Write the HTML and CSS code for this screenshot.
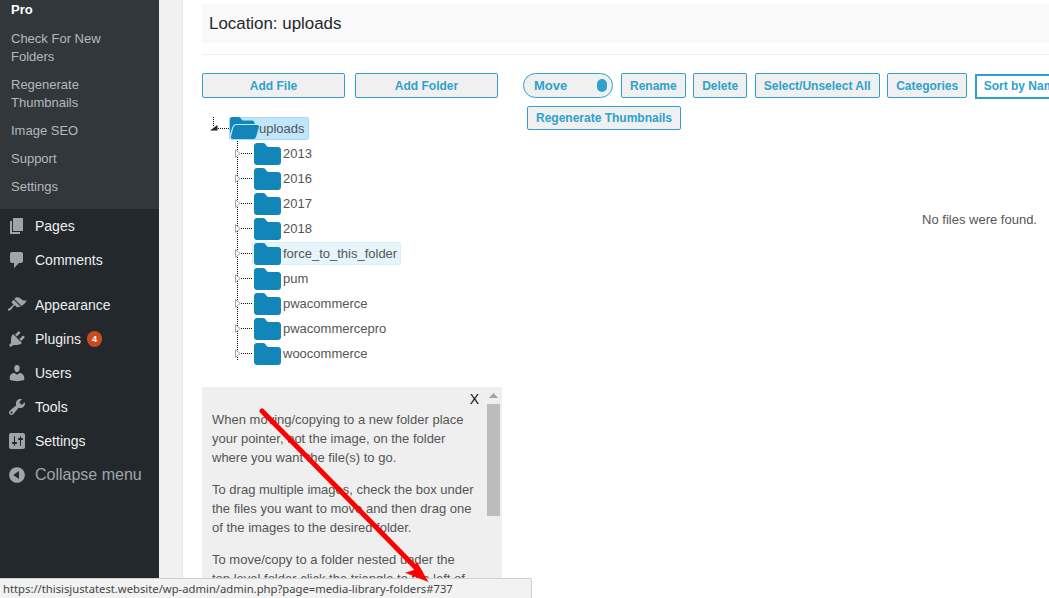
FILE: index.html
```html
<!DOCTYPE html>
<html lang="en">
<head>
<meta charset="utf-8">
<title>Media Library Folders</title>
<link rel="stylesheet" href="styles.css">
</head>
<body>
<div class="app">
  <nav class="sidebar">
    <ul class="submenu">
      <li class="current">Pro</li>
      <li>Check For New Folders</li>
      <li>Regenerate Thumbnails</li>
      <li>Image SEO</li>
      <li>Support</li>
      <li>Settings</li>
    </ul>
    <ul class="menu">
      <li><svg class="ico" viewBox="0 0 20 20"><path d="M6 15V2h10v13H6zm-1 1h8v2H3V5h2v11z"/></svg>Pages</li>
      <li><svg class="ico" viewBox="0 0 20 20"><path d="M5 2h9c1.1 0 2 .9 2 2v7c0 1.1-.9 2-2 2h-2l-5 5v-5H5c-1.1 0-2-.9-2-2V4c0-1.1.9-2 2-2z"/></svg>Comments</li>
      <li class="sep"></li>
      <li><svg class="ico" viewBox="0 0 20 20"><path d="M14.48 11.06L7.41 3.99l1.5-1.5c.5-.56 2.3-.47 3.51.32 1.21.8 1.43 1.28 2.91 2.1 1.3.7 2.8.9 4.3.5-.7 2-2.5 3.5-5.15 5.65zm-.71.71L6.7 4.7 4.93 6.47c-.39.39-.39 1.02 0 1.41l1.06 1.06c.39.39.39 1.03 0 1.42-.6.6-1.43 1.11-2.21 1.69-.35.26-.7.53-1.01.84C1.43 13.23.4 14.67 1.21 15.5s2.1-.24 3.33-1.45c.31-.31.58-.66.84-1.01.58-.78 1.09-1.61 1.69-2.21.39-.39 1.03-.39 1.42 0l1.06 1.06c.39.39 1.02.39 1.41 0z"/></svg>Appearance</li>
      <li><svg class="ico" viewBox="0 0 20 20"><path d="M13.11 4.36L9.87 7.6 8 5.73l3.24-3.24c.35-.34 1.05-.2 1.56.32.52.51.66 1.21.31 1.55zm-8 1.77l.91-1.12 9.01 9.01-1.19.84c-.71.71-2.63 1.16-3.82 1.16H6.14L4.9 17.26c-.59.59-1.54.59-2.12 0-.59-.58-.59-1.53 0-2.12l1.24-1.24v-3.88c0-1.13.4-3.19 1.09-3.89zm7.26 3.97l3.24-3.24c.34-.35 1.04-.21 1.55.31.52.51.66 1.21.31 1.55l-3.24 3.25z"/></svg>Plugins<span class="badge">4</span></li>
      <li><svg class="ico" viewBox="0 0 20 20"><path d="M10 9.25c-2.27 0-2.73-3.44-2.73-3.44C7 4.02 7.82 2 9.97 2c2.16 0 2.98 2.02 2.71 3.81 0 0-.41 3.44-2.68 3.44zm0 2.57L12.72 10c2.39 0 4.52 2.33 4.52 4.53v2.49s-3.65 1.13-7.24 1.13c-3.65 0-7.24-1.13-7.24-1.13v-2.49c0-2.25 1.94-4.48 4.47-4.48z"/></svg>Users</li>
      <li><svg class="ico" viewBox="0 0 20 20"><path d="M16.68 9.77c-1.34 1.34-3.3 1.67-4.95.99l-5.41 6.52c-.99.99-2.59.99-3.58 0s-.99-2.59 0-3.57l6.52-5.42c-.68-1.65-.35-3.61.99-4.95 1.28-1.28 3.12-1.62 4.72-1.06l-2.89 2.89 2.82 2.82 2.86-2.87c.53 1.58.18 3.39-1.08 4.65zM3.81 16.21c.4.39 1.04.39 1.43 0 .4-.4.4-1.04 0-1.43-.39-.4-1.03-.4-1.43 0-.39.39-.39 1.03 0 1.43z"/></svg>Tools</li>
      <li><svg class="ico" viewBox="0 0 20 20"><path d="M18 16V4c0-1.1-.9-2-2-2H4c-1.1 0-2 .9-2 2v12c0 1.1.9 2 2 2h12c1.1 0 2-.9 2-2zM8 11h1c.55 0 1 .45 1 1s-.45 1-1 1H8v1.5c0 .28-.22.5-.5.5s-.5-.22-.5-.5V13H6c-.55 0-1-.45-1-1s.45-1 1-1h1V5.5c0-.28.22-.5.5-.5s.5.22.5.5V11zm5-2h-1c-.55 0-1-.45-1-1s.45-1 1-1h1V5.5c0-.28.22-.5.5-.5s.5.22.5.5V7h1c.55 0 1 .45 1 1s-.45 1-1 1h-1v5.5c0 .28-.22.5-.5.5s-.5-.22-.5-.5V9z"/></svg>Settings</li>
      <li class="collapse"><svg class="ico" viewBox="0 0 20 20"><path d="M10 2.16c4.33 0 7.84 3.51 7.84 7.84s-3.51 7.84-7.84 7.84S2.16 14.33 2.16 10C2.16 5.71 5.71 2.16 10 2.16zm2 11.72V6.12L6.18 9.97z"/></svg>Collapse menu</li>
    </ul>
  </nav>
  <main class="content">
    <div class="location">Location: uploads</div>
    <div class="rule"></div>
    <div class="columns">
      <section class="left">
        <div class="add-row">
          <button class="btn wide">Add File</button>
          <button class="btn wide">Add Folder</button>
        </div>
        <div class="tree">
          <div class="root-row">
            <svg class="root-toggle" viewBox="0 0 8 6"><path d="M7.5 0v5.500H0z" fill="#222"/></svg>
            <span class="root-dots"></span>
            <span class="node selected">
              <svg class="folder-open" viewBox="0 0 29 22"><path d="M0 2.5C0 1 1 0 2.5 0h6c1.5 0 2 1 3 2.5.4.7 1 1 2 1h8.5c1.4 0 2.5 1 2.5 2.5v1H6.5C4 7 3 8.4 2.4 10L0 17z" fill="#1286b9"/><path d="M6.6 8H27c1.5 0 2.2 1 1.8 2.4l-2.6 9.2c-.4 1.4-1.4 2.4-3 2.4H3c-1.600 0-2.400-1-2-2.400L3.400 10.400C3.900 8.900 5 8 6.600 8z" fill="#1286b9"/></svg>
              <span>uploads</span>
            </span>
          </div>
          <ul class="children">
            <li class="row"><svg class="toggle" viewBox="0 0 6 9"><path d="M.5.7v7.6L5.2 4.500z" fill="#fff" stroke="#a5a5a5"/></svg><span class="dots"></span><svg class="folder" viewBox="0 0 27 22"><path d="M0 3C0 1.300 1.300 0 3 0h6c1.500 0 2.300.8 3 2 .6 1.100 1.300 2 3 2h9c1.700 0 3 1.300 3 3v12c0 1.700-1.300 3-3 3H3c-1.700 0-3-1.300-3-3z" fill="#1286b9"/></svg><span class="label">2013</span></li>
            <li class="row"><svg class="toggle" viewBox="0 0 6 9"><path d="M.5.7v7.6L5.2 4.500z" fill="#fff" stroke="#a5a5a5"/></svg><span class="dots"></span><svg class="folder" viewBox="0 0 27 22"><path d="M0 3C0 1.300 1.300 0 3 0h6c1.500 0 2.300.8 3 2 .6 1.100 1.300 2 3 2h9c1.700 0 3 1.300 3 3v12c0 1.700-1.300 3-3 3H3c-1.700 0-3-1.300-3-3z" fill="#1286b9"/></svg><span class="label">2016</span></li>
            <li class="row"><svg class="toggle" viewBox="0 0 6 9"><path d="M.5.7v7.6L5.2 4.500z" fill="#fff" stroke="#a5a5a5"/></svg><span class="dots"></span><svg class="folder" viewBox="0 0 27 22"><path d="M0 3C0 1.300 1.300 0 3 0h6c1.500 0 2.300.8 3 2 .6 1.100 1.300 2 3 2h9c1.700 0 3 1.300 3 3v12c0 1.700-1.300 3-3 3H3c-1.700 0-3-1.300-3-3z" fill="#1286b9"/></svg><span class="label">2017</span></li>
            <li class="row"><svg class="toggle" viewBox="0 0 6 9"><path d="M.5.7v7.6L5.2 4.500z" fill="#fff" stroke="#a5a5a5"/></svg><span class="dots"></span><svg class="folder" viewBox="0 0 27 22"><path d="M0 3C0 1.300 1.300 0 3 0h6c1.500 0 2.300.8 3 2 .6 1.100 1.300 2 3 2h9c1.700 0 3 1.300 3 3v12c0 1.700-1.300 3-3 3H3c-1.700 0-3-1.300-3-3z" fill="#1286b9"/></svg><span class="label">2018</span></li>
            <li class="row hover"><svg class="toggle" viewBox="0 0 6 9"><path d="M.5.7v7.6L5.2 4.500z" fill="#fff" stroke="#a5a5a5"/></svg><span class="dots"></span><span class="hover-node"><svg class="folder" viewBox="0 0 27 22"><path d="M0 3C0 1.300 1.300 0 3 0h6c1.500 0 2.300.8 3 2 .6 1.100 1.300 2 3 2h9c1.700 0 3 1.300 3 3v12c0 1.700-1.300 3-3 3H3c-1.700 0-3-1.300-3-3z" fill="#1286b9"/></svg><span class="label">force_to_this_folder</span></span></li>
            <li class="row"><svg class="toggle" viewBox="0 0 6 9"><path d="M.5.7v7.6L5.2 4.500z" fill="#fff" stroke="#a5a5a5"/></svg><span class="dots"></span><svg class="folder" viewBox="0 0 27 22"><path d="M0 3C0 1.300 1.300 0 3 0h6c1.500 0 2.300.8 3 2 .6 1.100 1.300 2 3 2h9c1.700 0 3 1.300 3 3v12c0 1.700-1.300 3-3 3H3c-1.700 0-3-1.300-3-3z" fill="#1286b9"/></svg><span class="label">pum</span></li>
            <li class="row"><svg class="toggle" viewBox="0 0 6 9"><path d="M.5.7v7.6L5.2 4.500z" fill="#fff" stroke="#a5a5a5"/></svg><span class="dots"></span><svg class="folder" viewBox="0 0 27 22"><path d="M0 3C0 1.300 1.300 0 3 0h6c1.500 0 2.300.8 3 2 .6 1.100 1.300 2 3 2h9c1.700 0 3 1.300 3 3v12c0 1.700-1.300 3-3 3H3c-1.700 0-3-1.300-3-3z" fill="#1286b9"/></svg><span class="label">pwacommerce</span></li>
            <li class="row"><svg class="toggle" viewBox="0 0 6 9"><path d="M.5.7v7.6L5.2 4.500z" fill="#fff" stroke="#a5a5a5"/></svg><span class="dots"></span><svg class="folder" viewBox="0 0 27 22"><path d="M0 3C0 1.300 1.300 0 3 0h6c1.500 0 2.300.8 3 2 .6 1.100 1.300 2 3 2h9c1.700 0 3 1.300 3 3v12c0 1.700-1.300 3-3 3H3c-1.700 0-3-1.300-3-3z" fill="#1286b9"/></svg><span class="label">pwacommercepro</span></li>
            <li class="row"><svg class="toggle" viewBox="0 0 6 9"><path d="M.5.7v7.6L5.2 4.500z" fill="#fff" stroke="#a5a5a5"/></svg><span class="dots"></span><svg class="folder" viewBox="0 0 27 22"><path d="M0 3C0 1.300 1.300 0 3 0h6c1.500 0 2.300.8 3 2 .6 1.100 1.300 2 3 2h9c1.700 0 3 1.300 3 3v12c0 1.700-1.300 3-3 3H3c-1.700 0-3-1.300-3-3z" fill="#1286b9"/></svg><span class="label">woocommerce</span></li>
          </ul>
        </div>
        <div class="help">
          <div class="help-body">
            <div class="close">X</div>
            <p>When moving/copying to a new folder place your pointer, not the image, on the folder where you want the file(s) to go.</p>
            <p>To drag multiple images, check the box under the files you want to move and then drag one of the images to the desired folder.</p>
            <p>To move/copy to a folder nested under the top level folder click the triangle to the left of</p>
          </div>
          <div class="scrollbar">
            <svg class="scroll-arrow" viewBox="0 0 9 5"><path d="M4.500 0L9 5H0z" fill="#a3a3a3"/></svg>
            <div class="thumb"></div>
          </div>
        </div>
      </section>
      <section class="right">
        <div class="toolbar">
          <div class="toggle-btn"><span>Move</span><i class="knob"></i></div>
          <button class="btn">Rename</button>
          <button class="btn">Delete</button>
          <button class="btn">Select/Unselect All</button>
          <button class="btn">Categories</button>
          <div class="sort">Sort by Name</div>
        </div>
        <div class="toolbar second"><button class="btn short">Regenerate Thumbnails</button></div>
        <p class="empty">No files were found.</p>
      </section>
    </div>
  </main>
</div>
<svg class="annotation" viewBox="0 0 1049 598"><path d="M262 411L420 572" stroke="#f00" stroke-width="5" stroke-linecap="round" fill="none"/><path d="M428.500 582L416.700 561.500 414 570 405 572.700z" fill="#f00"/></svg>
<div class="status">https://thisisjustatest.website/wp-admin/admin.php?page=media-library-folders#737</div>
</body>
</html>
```
FILE: styles.css
```css
* { box-sizing: border-box; }
html, body { margin: 0; height: 100%; overflow: hidden; }
body { font-family: "Liberation Sans", Arial, sans-serif; font-size: 14px; color: #444; background: #f1f1f1; }
ul { list-style: none; margin: 0; padding: 0; }
.app { display: flex; height: 598px; }

.sidebar { width: 159px; flex: none; background: #23282d; }
.submenu { background: #32373c; height: 209px; padding: 1px 30px 14px 11px; display: flex; flex-direction: column; gap: 10px; color: #b4b9be; font-size: 13px; line-height: 18px; }
.submenu .current { color: #fff; font-weight: 700; font-size: 13px; margin-bottom: 1px; }
.menu li { height: 34px; display: flex; align-items: center; color: #eee; font-size: 14px; }
.menu .sep { height: 11px; }
.ico { width: 20px; height: 20px; fill: #a0a5aa; margin: 0 8px 0 7px; flex: none; }
.badge { width: 15px; height: 16px; margin-left: 6px; border-radius: 8px; background: #ca4a1f; color: #fff; font-size: 9px; font-weight: 700; line-height: 16px; text-align: center; }
.menu .collapse { color: #a0a5aa; font-size: 16px; }

.content { flex: 1; min-width: 0; margin-left: 23px; background: #fff; border-left: 1px solid #e9e9e9; padding: 4px 0 0 19px; overflow: hidden; }
.location { height: 39px; background: #f9f9f9; padding-left: 7px; font-size: 16.900px; line-height: 39px; color: #23282d; }
.rule { height: 1px; margin-top: 11px; background: #eee; }
.columns { display: flex; margin-top: 18px; }
.left { width: 300px; flex: none; }
.right { flex: 1; min-width: 0; margin-left: 21px; }

.btn { height: 25px; padding: 0 8px; border: 1px solid #2ea2cc; border-radius: 2px; background: #f0f0f0; color: #2ea2cc; font: 700 12px "Liberation Sans", Arial, sans-serif; white-space: nowrap; flex: none; }
.short { height: 24px; }
.add-row { display: flex; gap: 10px; }
.wide { width: 143px; }

.tree { margin-top: 18px; height: 271px; position: relative; font-size: 13px; color: #555; }
.root-row { display: flex; align-items: center; height: 25px; padding: 0 0 1px 8px; }
.root-toggle { width: 8px; height: 6px; flex: none; }
.root-row::before { content: ""; position: absolute; left: 11px; top: 1px; height: 9px; border-left: 1px dotted #111; }
.root-dots { width: 11px; margin-top: 1px; border-top: 1px dotted #111; flex: none; }
.node { display: flex; align-items: center; width: 80px; height: 23px; padding-top: 1px; background: #bfe6fb; border: 1px solid #a9d8f0; border-radius: 2px; color: #555; }
.folder-open { width: 29px; height: 22px; flex: none; margin-top: -2px; }
.children { margin-left: 35px; border-left: 1px dotted #111; height: 219px; }
.row { display: flex; align-items: center; height: 25px; margin-left: -3px; }
.toggle { width: 6px; height: 9px; flex: none; }
.dots { width: 11px; border-top: 1px dotted #111; flex: none; }
.folder { width: 27px; height: 22px; flex: none; margin-left: 2px; }
.label { margin-left: 2px; }
.hover-node { display: flex; align-items: center; background: #e6f4fb; border: 1px solid #d8eef8; border-radius: 2px; height: 23px; padding-right: 3px; }
.hover-node .folder { margin-left: 1px; }

.help { display: flex; height: 240px; background: #efefef; }
.help-body { flex: 1; min-width: 0; padding: 0 12px 0 10px; font-size: 13px; line-height: 19px; color: #555; }
.close { font-size: 14px; line-height: 20px; color: #111; text-align: right; margin: 2px -5px 0 0; height: 21px; }
.help-body p { margin: 0 0 13px; }
.scrollbar { width: 15px; flex: none; padding-top: 6px; margin-right: 1px; }
.scroll-arrow { display: block; width: 9px; height: 5px; margin: 0 auto 6px; }
.thumb { width: 13px; height: 112px; background: #bcbcbc; margin: 0 auto; }

.toolbar { display: flex; gap: 7.500px; align-items: flex-start; }
.toggle-btn { width: 90px; height: 25px; margin-right: .5px; display: flex; align-items: center; justify-content: space-between; padding: 0 5px 0 10px; border: 1px solid #2ea2cc; border-radius: 13px; background: #f0f0f0; color: #2ea2cc; font-size: 13px; font-weight: 700; flex: none; }
.knob { width: 10px; height: 13px; border-radius: 5px; background: #2ea2cc; }
.sort { height: 25px; width: 100px; margin-top: 1px; padding-left: 7px; border: 2px solid #2ea2cc; background: #fff; color: #2ea2cc; font-size: 12px; font-weight: 700; line-height: 21px; white-space: nowrap; flex: none; }
.second { margin: 7px 0 0 4px; }
.empty { margin: 81px 12px 0 0; text-align: right; font-size: 13px; color: #555; line-height: 18px; }

.annotation { position: absolute; left: 0; top: 0; width: 1049px; height: 598px; z-index: 3; pointer-events: none; }
.status { position: absolute; left: 0; bottom: 0; width: 532px; height: 20px; z-index: 2; padding: 1px 0 0 3px; background: #f2f2f2; border-top: 1px solid #d0d0d0; border-right: 1px solid #d0d0d0; border-top-right-radius: 2px; font: 11.250px/17px "Noto Sans", "Open Sans", sans-serif; color: #444; white-space: nowrap; }
```
